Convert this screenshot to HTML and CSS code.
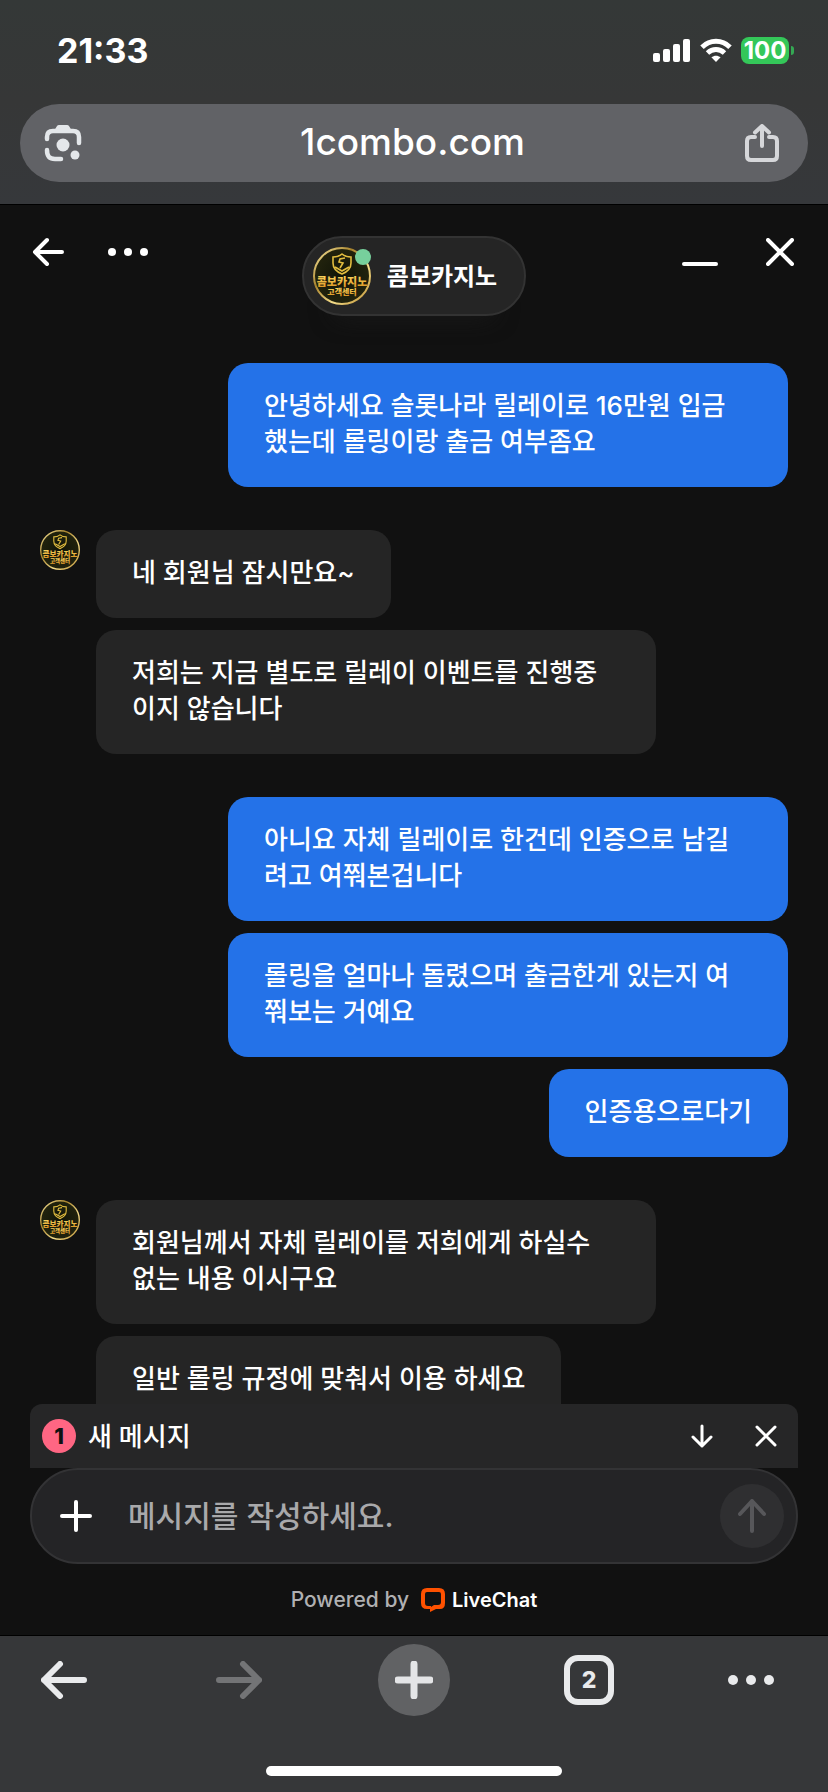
FILE: index.html
```html
<!DOCTYPE html>
<html lang="ko">

<head>
  <meta charset="utf-8">
  <meta name="viewport" content="width=device-width, initial-scale=1">
  <title>콤보카지노</title>
  <link rel="stylesheet" href="styles.css">
</head>

<body>
  <!-- shared badge logo -->
  <svg class="defs" aria-hidden="true">
    <defs>
      <linearGradient id="gold" x1="0" y1="0" x2="1" y2="1">
        <stop offset="0" stop-color="#fff0a8" />
        <stop offset="0.35" stop-color="#a8832c" />
        <stop offset="0.65" stop-color="#f3dc8a" />
        <stop offset="1" stop-color="#b98a2a" />
      </linearGradient>
      <linearGradient id="goldtext" x1="0" y1="0" x2="0" y2="1">
        <stop offset="0" stop-color="#ffe36a" />
        <stop offset="1" stop-color="#d98e1c" />
      </linearGradient>
      <radialGradient id="badgebg">
        <stop offset="0" stop-color="#101408" />
        <stop offset="1" stop-color="#22230d" />
      </radialGradient>
      <symbol id="logo" viewBox="0 0 58 58">
        <circle cx="29" cy="29" r="28" fill="url(#badgebg)" stroke="url(#gold)" stroke-width="2" />
        <path d="M29 7c3 2.400 6 3 9 3v6c0 5-4 9-9 11-5-2-9-6-9-11v-6c3 0 6-.6 9-3z" fill="none" stroke="#e2bd3f" stroke-width="1.600" />
        <path d="M32 11l-5 1-1 3 4 1-3 5M22 20l7 4 7-4" fill="none" stroke="#e2bd3f" stroke-width="1.600" />
        <text class="logo-name" x="29" y="39" text-anchor="middle" fill="url(#goldtext)">콤보카지노</text>
        <text class="logo-sub" x="29" y="48" text-anchor="middle" fill="url(#goldtext)">고객센터</text>
      </symbol>
    </defs>
  </svg>

  <div class="browser-top">
    <div class="status">
      <span class="time">21:33</span>
      <div class="status-icons">
        <svg width="38" height="24" viewBox="0 0 38 24" fill="#fff">
          <rect x="0" y="15" width="7" height="9" rx="2" />
          <rect x="10" y="11" width="7" height="13" rx="2" />
          <rect x="20" y="6" width="7" height="18" rx="2" />
          <rect x="30" y="1" width="7" height="23" rx="2" />
        </svg>
        <svg width="32" height="24" viewBox="0 0 32 24" fill="none" stroke="#fff" stroke-width="5">
          <path d="M2 9.200C10 1.400 22 1.400 30 9.200" />
          <path d="M7.500 15C12.500 10.400 19.500 10.400 24.500 15" />
          <path d="M16 24l-4.600-4.700c2.800-2.200 6.400-2.200 9.200 0z" fill="#fff" stroke="none" />
        </svg>
        <span class="battery">100</span>
      </div>
    </div>
    <div class="urlbar">
      <button type="button" class="icon-btn" aria-label="Lens">
        <svg width="38" height="38" viewBox="0 0 38 38" fill="none" stroke="#e4e7ea" stroke-width="4.500" stroke-linecap="round">
          <path d="M3 15v-2c0-4 2-6 6-6h20c4 0 6 2 6 6v6" />
          <path d="M3 26c0 6 2 9 8 9h6" />
          <path d="M10 7l3-5q.6-1 2-1h8q1.400 0 2 1l3 5z" fill="#e4e7ea" stroke="none" />
          <circle cx="19" cy="21" r="6.500" fill="#e4e7ea" stroke="none" />
          <circle cx="31" cy="31" r="4.500" fill="#e4e7ea" stroke="none" />
        </svg>
      </button>
      <a class="url" href="#">1combo.com</a>
      <button type="button" class="icon-btn" aria-label="Share">
        <svg width="38" height="38" viewBox="0 0 38 38" fill="none" stroke="#d6d7da" stroke-width="4" stroke-linecap="round" stroke-linejoin="round">
          <path d="M12 13H8q-4 0-4 4v15q0 4 4 4h22q4 0 4-4V17q0-4-4-4h-4" />
          <path d="M19 22V3M12 8.500l7-6.500 7 6.500" />
        </svg>
      </button>
    </div>
  </div>

  <main class="chat">
    <header class="chat-header">
      <div class="side">
        <button type="button" class="icon-btn" aria-label="Back">
          <svg width="32" height="32" viewBox="0 0 32 32" fill="none" stroke="#fff" stroke-width="4" stroke-linecap="round" stroke-linejoin="round">
            <path d="M15 4L3 16l12 12M3 16h27" />
          </svg>
        </button>
        <button type="button" class="icon-btn" aria-label="Menu">
          <svg width="42" height="10" viewBox="0 0 42 10" fill="#fff">
            <circle cx="5" cy="5" r="4" />
            <circle cx="21" cy="5" r="4" />
            <circle cx="37" cy="5" r="4" />
          </svg>
        </button>
      </div>
      <div class="agent">
        <div class="agent-photo">
          <svg class="agent-logo" width="58" height="58"><use href="#logo" /></svg>
          <span class="online"></span>
        </div>
        <span class="agent-name">콤보카지노</span>
      </div>
      <div class="side side-right">
        <button type="button" class="icon-btn" aria-label="Minimize">
          <svg width="36" height="28" viewBox="0 0 36 28" stroke="#fff" stroke-width="4" stroke-linecap="round">
            <path d="M2 26h32" />
          </svg>
        </button>
        <button type="button" class="icon-btn" aria-label="Close">
          <svg width="28" height="28" viewBox="0 0 28 28" stroke="#fff" stroke-width="4" stroke-linecap="round">
            <path d="M2 2l24 24M26 2L2 26" />
          </svg>
        </button>
      </div>
    </header>

    <div class="messages">
      <div class="group mine">
        <p class="bubble wide">안녕하세요 슬롯나라 릴레이로 16만원 입금<br>했는데 롤링이랑 출금 여부좀요</p>
      </div>
      <div class="group">
        <svg class="avatar" width="40" height="40"><use href="#logo" /></svg>
        <div class="stack">
          <p class="bubble">네 회원님 잠시만요~</p>
          <p class="bubble">저희는 지금 별도로 릴레이 이벤트를 진행중이지 않습니다</p>
        </div>
      </div>
      <div class="group mine">
        <div class="stack">
          <p class="bubble">아니요 자체 릴레이로 한건데 인증으로 남길려고 여쭤본겁니다</p>
          <p class="bubble">롤링을 얼마나 돌렸으며 출금한게 있는지 여쭤보는 거예요</p>
          <p class="bubble">인증용으로다기</p>
        </div>
      </div>
      <div class="group">
        <svg class="avatar" width="40" height="40"><use href="#logo" /></svg>
        <div class="stack">
          <p class="bubble">회원님께서 자체 릴레이를 저희에게 하실수 없는 내용 이시구요</p>
          <p class="bubble">일반 롤링 규정에 맞춰서 이용 하세요</p>
        </div>
      </div>
    </div>

    <div class="new-bar">
      <span class="count">1</span>
      <span class="new-text">새 메시지</span>
      <button type="button" class="icon-btn" aria-label="Scroll down">
        <svg width="22" height="24" viewBox="0 0 22 24" fill="none" stroke="#fff" stroke-width="3" stroke-linecap="round" stroke-linejoin="round">
          <path d="M11 2v20M2 13l9 9 9-9" />
        </svg>
      </button>
      <button type="button" class="icon-btn" aria-label="Dismiss">
        <svg width="22" height="22" viewBox="0 0 22 22" stroke="#fff" stroke-width="3" stroke-linecap="round">
          <path d="M2 2l18 18M20 2L2 20" />
        </svg>
      </button>
    </div>

    <form class="composer">
      <button type="button" class="icon-btn" aria-label="Attach">
        <svg width="32" height="32" viewBox="0 0 32 32" stroke="#fff" stroke-width="4" stroke-linecap="round">
          <path d="M16 2v28M2 16h28" />
        </svg>
      </button>
      <input class="message-input" type="text" aria-label="메시지" placeholder="메시지를 작성하세요.">
      <button type="button" class="send" aria-label="Send">
        <svg width="28" height="34" viewBox="0 0 28 34" fill="none" stroke="#57575a" stroke-width="4" stroke-linecap="round" stroke-linejoin="round">
          <path d="M14 32V2M2 15L14 2l12 13" />
        </svg>
      </button>
    </form>

    <div class="powered">
      <span>Powered by</span>
      <a class="livechat" href="#">
        <svg width="24" height="24" viewBox="0 0 24 24">
          <path fill="#ff5100" fill-rule="evenodd" d="M6 0h12q6 0 6 6v9q0 6-5 6h-4l-6 3v-3H6q-6 0-6-6V6q0-6 6-6zM6 4Q4 4 4 6v9q0 3 3 3h3v1l3-2h4q3 0 3-3V6q0-2-2-2z" />
        </svg>
        LiveChat
      </a>
    </div>
  </main>

  <nav class="browser-bottom">
    <div class="tools">
      <button type="button" class="tool" aria-label="Back">
        <svg width="46" height="38" viewBox="0 0 46 38" fill="none" stroke="#e9eaec" stroke-width="6" stroke-linecap="round" stroke-linejoin="round">
          <path d="M19 3L3 19l16 16M3 19h40" />
        </svg>
      </button>
      <button type="button" class="tool" aria-label="Forward">
        <svg width="46" height="38" viewBox="0 0 46 38" fill="none" stroke="#737476" stroke-width="6" stroke-linecap="round" stroke-linejoin="round">
          <path d="M27 3l16 16-16 16M43 19H3" />
        </svg>
      </button>
      <button type="button" class="tool tool-new" aria-label="New tab">
        <svg width="38" height="38" viewBox="0 0 38 38" stroke="#e4e5e7" stroke-width="7" stroke-linecap="round">
          <path d="M19 3v32M3 19h32" />
        </svg>
      </button>
      <button type="button" class="tool" aria-label="Tabs"><span class="tabs">2</span></button>
      <button type="button" class="tool tool-more" aria-label="More">
        <svg width="46" height="12" viewBox="0 0 46 12" fill="#e9eaec">
          <circle cx="5" cy="6" r="5" />
          <circle cx="23" cy="6" r="5" />
          <circle cx="41" cy="6" r="5" />
        </svg>
      </button>
    </div>
    <div class="home-bar"></div>
  </nav>
</body>

</html>
```
FILE: styles.css
```css
* {
  box-sizing: border-box;
}

body {
  margin: 0;
  height: 100vh;
  display: flex;
  flex-direction: column;
  background: #111;
  color: #fff;
  font-family: Inter, "Noto Sans CJK KR", sans-serif;
  font-size: 26px;
}

button {
  border: 0;
  padding: 0;
  background: none;
  color: inherit;
  font: inherit;
  cursor: pointer;
}

a {
  color: inherit;
  text-decoration: none;
}

svg {
  display: block;
}

.defs {
  position: absolute;
  width: 0;
  height: 0;
}

.logo-name {
  font: 900 11px "Noto Sans CJK KR", sans-serif;
}

.logo-sub {
  font: 900 8px "Noto Sans CJK KR", sans-serif;
}

.icon-btn {
  display: flex;
  align-items: center;
  justify-content: center;
  flex: none;
  width: 44px;
  height: 44px;
}

/* browser chrome, top */
.browser-top {
  flex: none;
  padding: 30px 20px 22px;
  background: linear-gradient(#343837, #363737 50%, #36383b);
}

.status {
  display: flex;
  align-items: center;
  justify-content: space-between;
  height: 40px;
  margin-bottom: 34px;
  padding: 0 14px 0 37px;
}

.time {
  font-size: 34px;
  font-weight: 700;
}

.status-icons {
  display: flex;
  align-items: center;
  gap: 9px;
}

.battery {
  position: relative;
  width: 48px;
  height: 27px;
  margin-right: 5px;
  border-radius: 8px;
  background: #34c759;
  font-size: 24px;
  font-weight: 700;
  line-height: 27px;
  text-align: center;
}

.battery::after {
  content: "";
  position: absolute;
  left: 50px;
  top: 9px;
  width: 3px;
  height: 9px;
  border-radius: 0 4px 4px 0;
  background: #34a853;
}

.urlbar {
  display: flex;
  align-items: center;
  justify-content: space-between;
  height: 78px;
  padding: 0 24px 0 21px;
  border-radius: 39px;
  background: #616266;
}

.url {
  padding-bottom: 4px;
  font-size: 37px;
  font-weight: 500;
}

/* chat */
.chat {
  flex: 1;
  min-height: 0;
  display: flex;
  flex-direction: column;
  border-top: 1px solid #000;
  border-bottom: 1px solid #000;
  background: #111;
}

.chat-header {
  display: grid;
  grid-template-columns: 1fr auto 1fr;
  align-items: start;
  padding: 25px 26px 0;
}

.side {
  display: flex;
  gap: 36px;
}

.side-right {
  justify-content: flex-end;
}

.agent {
  display: flex;
  align-items: center;
  gap: 16px;
  height: 80px;
  margin-top: 6px;
  padding: 0 27px 0 9px;
  border: 2px solid #333;
  border-radius: 40px;
  background: #252525;
  /* hint of the messages scrolled under the header */
  box-shadow: 0 32px 24px -32px #1c1c1c;
}

.agent-photo {
  position: relative;
}

.online {
  position: absolute;
  top: 2px;
  right: 0;
  width: 16px;
  height: 16px;
  border-radius: 50%;
  background: #77d09c;
}

.agent-name {
  padding-bottom: 4px;
  font-size: 24px;
  font-weight: 600;
}

.messages {
  flex: 1;
  min-height: 0;
  overflow: hidden;
  display: flex;
  flex-direction: column;
  gap: 43px;
  padding: 47px 40px 0;
}

.group {
  display: flex;
  flex: none;
  gap: 16px;
}

.mine {
  justify-content: flex-end;
}

.avatar {
  flex: none;
}

.stack {
  display: flex;
  flex-direction: column;
  align-items: flex-start;
  gap: 12px;
}

.mine .stack {
  align-items: flex-end;
}

.bubble {
  max-width: 560px;
  margin: 0;
  padding: 25px 36px 27px;
  border-radius: 20px;
  background: #252525;
  font-weight: 500;
  line-height: 36px;
}

.mine .bubble {
  background: #2472e8;
}

.wide {
  width: 560px;
}

.new-bar {
  display: flex;
  align-items: center;
  gap: 20px;
  height: 64px;
  margin: 0 30px;
  padding: 0 10px 0 12px;
  border-radius: 12px 12px 0 0;
  background: #262627;
  font-weight: 500;
}

.count {
  width: 34px;
  height: 34px;
  border-radius: 50%;
  background: #ff6683;
  color: #111;
  font-size: 22px;
  font-weight: 800;
  line-height: 34px;
  text-align: center;
}

.new-text {
  flex: 1;
  margin-left: -8px;
  padding-bottom: 4px;
}

.composer {
  display: flex;
  align-items: center;
  height: 96px;
  margin: 0 30px;
  padding: 0 12px 0 22px;
  border: 2px solid #333335;
  border-radius: 48px;
  background: #242426;
}

.message-input {
  flex: 1;
  min-width: 0;
  margin: 0 24px 0 30px;
  padding: 0;
  border: 0;
  outline: 0;
  background: none;
  color: #fff;
  font: inherit;
  font-size: 30px;
  font-weight: 500;
}

.message-input::placeholder {
  color: #a9a9ab;
  opacity: 1;
}

.send {
  display: flex;
  align-items: center;
  justify-content: center;
  width: 64px;
  height: 64px;
  border-radius: 50%;
  background: #2f2f31;
}

.powered {
  display: flex;
  align-items: center;
  justify-content: center;
  gap: 12px;
  height: 71px;
  color: #b0b0b2;
  font-size: 21px;
  font-weight: 500;
}

.livechat {
  display: flex;
  align-items: center;
  gap: 7px;
  color: #fff;
  font-size: 20px;
  font-weight: 600;
}

/* browser chrome, bottom */
.browser-bottom {
  flex: none;
  padding: 8px 0 16px;
  background: #363739;
}

.tools {
  display: flex;
  justify-content: space-between;
  height: 72px;
  margin-bottom: 50px;
  padding: 0 54px 0 28px;
}

.tool {
  display: flex;
  align-items: center;
  justify-content: center;
  width: 72px;
  height: 72px;
}

.tool-new {
  border-radius: 50%;
  background: #616264;
}

.tool-more {
  width: 46px;
}

.tabs {
  width: 50px;
  height: 50px;
  border: 6px solid #e9eaec;
  border-radius: 14px;
  color: #e9eaec;
  font-size: 23px;
  font-weight: 800;
  line-height: 38px;
}

.home-bar {
  width: 296px;
  height: 10px;
  margin: 0 auto;
  border-radius: 5px;
  background: #fff;
}
```
